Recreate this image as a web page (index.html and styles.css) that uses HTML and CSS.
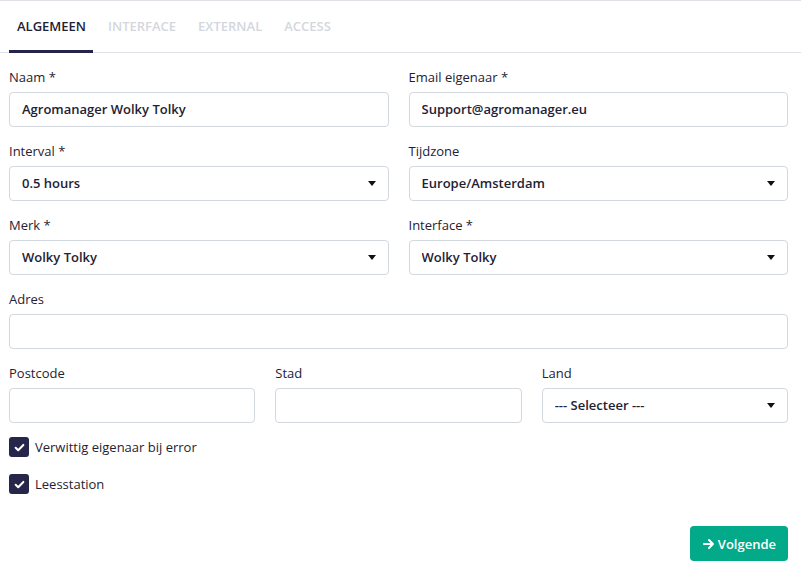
FILE: index.html
```html
<!DOCTYPE html>
<html>

<head>
    <meta charset="utf-8">
    <title>Station</title>
    <link rel="stylesheet" href="styles.css">
</head>

<body>
    <!-- tabbladen -->
    <nav class="tabs">
        <a class="tab active">Algemeen</a>
        <a class="tab">Interface</a>
        <a class="tab">External</a>
        <a class="tab">Access</a>
    </nav>

    <form class="form">
        <div class="row cols-2">
            <div class="field">
                <label>Naam *</label>
                <input class="control" type="text" value="Agromanager Wolky Tolky">
            </div>
            <div class="field">
                <label>Email eigenaar *</label>
                <input class="control" type="text" value="Support@agromanager.eu">
            </div>
        </div>

        <div class="row cols-2">
            <div class="field">
                <label>Interval *</label>
                <div class="select">
                    <select class="control">
                        <option>0.5 hours</option>
                    </select>
                </div>
            </div>
            <div class="field">
                <label>Tijdzone</label>
                <div class="select">
                    <select class="control">
                        <option>Europe/Amsterdam</option>
                    </select>
                </div>
            </div>
        </div>

        <div class="row cols-2">
            <div class="field">
                <label>Merk *</label>
                <div class="select">
                    <select class="control">
                        <option>Wolky Tolky</option>
                    </select>
                </div>
            </div>
            <div class="field">
                <label>Interface *</label>
                <div class="select">
                    <select class="control">
                        <option>Wolky Tolky</option>
                    </select>
                </div>
            </div>
        </div>

        <div class="row">
            <div class="field">
                <label>Adres</label>
                <input class="control" type="text">
            </div>
        </div>

        <div class="row cols-3">
            <div class="field">
                <label>Postcode</label>
                <input class="control" type="text">
            </div>
            <div class="field">
                <label>Stad</label>
                <input class="control" type="text">
            </div>
            <div class="field">
                <label>Land</label>
                <div class="select">
                    <select class="control">
                        <option>--- Selecteer ---</option>
                    </select>
                </div>
            </div>
        </div>

        <label class="check">
            <span class="box">
                <svg viewBox="0 0 12 12" width="11" height="11"><path d="M1.8 6.3 L4.6 9 L10.2 3.2" fill="none" stroke="#fff" stroke-width="2.2" stroke-linecap="round" stroke-linejoin="round"/></svg>
            </span>
            Verwittig eigenaar bij error
        </label>
        <label class="check">
            <span class="box">
                <svg viewBox="0 0 12 12" width="11" height="11"><path d="M1.8 6.3 L4.6 9 L10.2 3.2" fill="none" stroke="#fff" stroke-width="2.2" stroke-linecap="round" stroke-linejoin="round"/></svg>
            </span>
            Leesstation
        </label>

        <div class="actions">
            <button class="btn" type="button">
                <svg viewBox="0 0 12 12" width="12" height="12"><path d="M1 6 H10 M6 2 L10 6 L6 10" fill="none" stroke="#fff" stroke-width="2" stroke-linecap="round" stroke-linejoin="round"/></svg>
                Volgende
            </button>
        </div>
    </form>
</body>

</html>
```

FILE: styles.css
```css
/* basis */
body {
    margin: 0;
    font-family: "Open Sans", "Liberation Sans", sans-serif;
    font-size: 13px;
    line-height: 20px;
    color: #1f2233;
    background: #fff;
}

/* tabbladen */
.tabs {
    display: flex;
    gap: 7px;
    padding-left: 9px;
    border-top: 1px solid #dee2e6;
    border-bottom: 1px solid #dee2e6;
}

.tab {
    padding: 15px 7px 14px 8px;
    margin-bottom: -1px;
    border-bottom: 3px solid transparent;
    font-weight: 600;
    text-transform: uppercase;
    color: #d3d7dd;
}

.tab.active {
    color: #1f2233;
    border-bottom-color: #23264a;
}

/* formulier */
.form {
    padding: 14px 13px 0 9px;
}

.row {
    display: grid;
    gap: 20px;
}

.cols-2 {
    grid-template-columns: 1fr 1fr;
}

.cols-3 {
    grid-template-columns: 1fr 1fr 1fr;
}

.field {
    margin-bottom: 14px;
}

.field label {
    display: block;
    margin-bottom: 5px;
}

.control {
    display: block;
    box-sizing: border-box;
    width: 100%;
    height: 35px;
    padding: 6px 12px 7px;
    border: 1px solid #d3d7de;
    border-radius: 4px;
    background: #fff;
    font: 600 13px/20px "Open Sans", "Liberation Sans", sans-serif;
    color: #1f2233;
    outline: none;
}

/* select met eigen pijltje */
.select {
    position: relative;
}

.select select {
    appearance: none;
    -webkit-appearance: none;
}

.select::after {
    content: "";
    position: absolute;
    right: 13px;
    top: 15px;
    border-left: 4px solid transparent;
    border-right: 4px solid transparent;
    border-top: 5px solid #111;
}

/* checkboxes */
.check {
    display: flex;
    align-items: center;
    gap: 6px;
    margin-bottom: 17px;
}

.box {
    display: flex;
    align-items: center;
    justify-content: center;
    width: 20px;
    height: 20px;
    border-radius: 3px;
    background: #25264a;
}

/* knop */
.actions {
    display: flex;
    justify-content: flex-end;
    margin-top: 32px;
}

.btn {
    display: flex;
    align-items: center;
    gap: 3px;
    height: 35px;
    padding: 0 12px 0 13px;
    border: 0;
    border-radius: 4px;
    background: #02aa8a;
    color: #fff;
    font: 600 13px/20px "Open Sans", "Liberation Sans", sans-serif;
}
```
